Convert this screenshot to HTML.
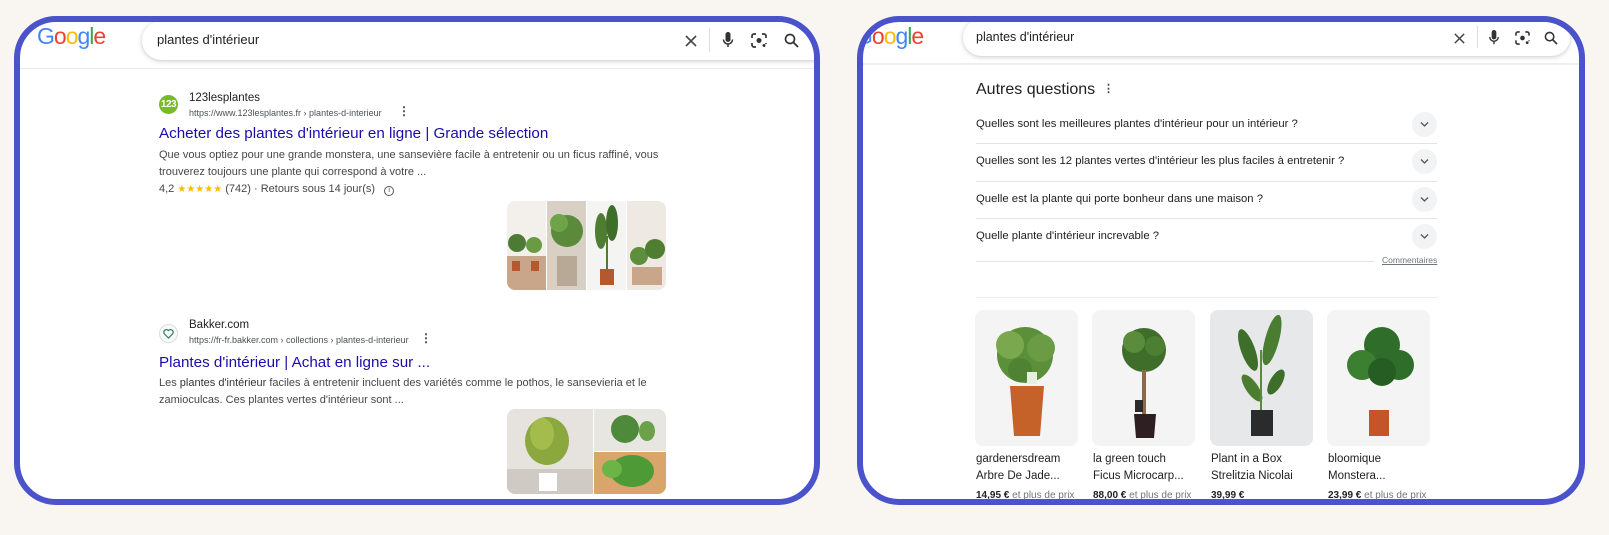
<!DOCTYPE html>
<html><head><meta charset="utf-8"><style>
*{margin:0;padding:0;box-sizing:border-box}
body{width:1609px;height:535px;background:#f9f5f1;position:relative;overflow:hidden;font-family:"Liberation Sans",Arial,sans-serif;color:#202124}
.panel{position:absolute;top:16px;height:489px;border:6px solid #4a52cc;border-radius:42px;background:#fff;overflow:hidden}
.a{position:absolute;white-space:nowrap}
.bar{position:absolute;background:#fff;border-radius:20px;box-shadow:0 1px 5px rgba(32,33,36,.25)}
.hl{position:absolute;left:0;right:0;height:1px;background:#e8eaed}
.logo{font-size:23px;letter-spacing:-1px;font-weight:normal}
.ic{position:absolute}
.sn{font-size:11px;color:#474747;line-height:17px}
.ttl{font-size:15.2px;color:#1a0dab}
.q{font-size:11.3px;color:#202124}
.sep{position:absolute;height:1px;background:#e3e3e3}
.chev{position:absolute;width:25px;height:25px;border-radius:50%;background:#f1f3f4}
.chev svg{position:absolute;left:8px;top:9px}
.card{position:absolute;top:288px;width:103px;height:136px;border-radius:8px;background:#f4f4f4;overflow:hidden}
.lb{font-size:11.5px;color:#202124}
.pr{font-size:10px;color:#202124}
.pr span{color:#70757a}
</style></head><body>

<!-- LEFT PANEL -->
<div class="panel" style="left:14px;width:806px">
 <div class="a logo" style="left:17px;top:1px"><span style="color:#4285f4">G</span><span style="color:#ea4335">o</span><span style="color:#fbbc05">o</span><span style="color:#4285f4">g</span><span style="color:#34a853">l</span><span style="color:#ea4335">e</span></div>
 <div class="bar" style="left:122px;top:-1px;width:700px;height:39px"></div>
 <div class="a" style="left:137px;top:10px;font-size:13px">plantes d'intérieur</div>
 <svg class="ic" style="left:664px;top:12px" width="14" height="14" viewBox="0 0 14 14"><path d="M2 2L12 12M12 2L2 12" stroke="#444" stroke-width="1.6"/></svg>
 <div class="a" style="left:689px;top:6px;width:1px;height:24px;background:#ddd"></div>
 <svg class="ic" style="left:702px;top:10px" width="12" height="17" viewBox="0 0 12 17"><rect x="3.5" y="0" width="5" height="10" rx="2.5" fill="#333"/><path d="M1.5 7.5a4.5 4.5 0 0 0 9 0M6 12v3" stroke="#333" stroke-width="1.5" fill="none"/></svg>
 <svg class="ic" style="left:731px;top:11px" width="16" height="15" viewBox="0 0 16 15"><path d="M1 5V3a2 2 0 0 1 2-2h2M11 1h2a2 2 0 0 1 2 2v2M1 10v2a2 2 0 0 0 2 2h2M15 10v1" stroke="#333" stroke-width="1.7" fill="none"/><circle cx="8" cy="7.5" r="2.5" fill="#333"/><circle cx="13" cy="12.5" r="1.5" fill="#333"/></svg>
 <svg class="ic" style="left:764px;top:11px" width="15" height="15" viewBox="0 0 15 15"><circle cx="6" cy="6" r="4.5" stroke="#333" stroke-width="1.7" fill="none"/><path d="M9.3 9.3L14 14" stroke="#333" stroke-width="1.8"/></svg>
 <div class="hl" style="top:46px"></div>

 <div class="a" style="left:139px;top:73px;width:19px;height:19px;border-radius:50%;background:#7ab929;color:#fff;font-size:10px;font-weight:bold;line-height:19px;text-align:center;letter-spacing:-.5px">123</div>
 <div class="a" style="left:169px;top:70px;font-size:11.5px">123lesplantes</div>
 <div class="a" style="left:169px;top:86px;font-size:9px;color:#4d5156">https://www.123lesplantes.fr › plantes-d-interieur</div>
 <div class="a" style="left:378px;top:82px;font-size:12px;color:#444;font-weight:bold">⋮</div>
 <div class="a ttl" style="left:139px;top:103px">Acheter des plantes d'intérieur en ligne | Grande sélection</div>
 <div class="a sn" style="left:139px;top:125px">Que vous optiez pour une grande monstera, une sansevière facile à entretenir ou un ficus raffiné, vous<br>trouverez toujours une plante qui correspond à votre ...</div>
 <div class="a sn" style="left:139px;top:159px">4,2 <span style="color:#fbbc04;font-size:10px">★★★★★</span> (742) · Retours sous 14 jour(s) &nbsp; <span style="display:inline-block;width:10px;height:10px;border:1px solid #555;border-radius:50%;font-size:7px;line-height:8px;text-align:center">i</span></div>
 <div class="a" style="left:487px;top:179px;width:159px;height:89px;border-radius:8px;overflow:hidden;display:flex;gap:1px">
  <svg width="39" height="89"><rect width="39" height="89" fill="#f3f0ec"/><rect x="0" y="55" width="39" height="34" fill="#c9a58a"/><circle cx="10" cy="42" r="9" fill="#4d7a35"/><circle cx="27" cy="44" r="8" fill="#6b9a44"/><rect x="5" y="60" width="8" height="10" fill="#b5582e"/><rect x="24" y="60" width="8" height="10" fill="#b5582e"/></svg>
  <svg width="39" height="89"><rect width="39" height="89" fill="#d8cfc5"/><circle cx="20" cy="30" r="16" fill="#5a8a3a"/><circle cx="12" cy="22" r="9" fill="#6fa347"/><rect x="10" y="55" width="20" height="30" fill="#b8a996"/></svg>
  <svg width="39" height="89"><rect width="39" height="89" fill="#f4f4f2"/><ellipse cx="14" cy="30" rx="6" ry="18" fill="#4e7d32"/><ellipse cx="25" cy="22" rx="6" ry="18" fill="#3f6e28"/><rect x="19" y="35" width="2" height="35" fill="#4e7d32"/><rect x="13" y="68" width="14" height="16" fill="#b5582e"/></svg>
  <svg width="39" height="89"><rect width="39" height="89" fill="#eee9e3"/><circle cx="12" cy="55" r="9" fill="#5d8e3b"/><circle cx="28" cy="48" r="10" fill="#4f7d31"/><rect x="5" y="66" width="30" height="18" fill="#c9a58a"/></svg>
 </div>

 <div class="a" style="left:139px;top:302px;width:19px;height:19px;border-radius:50%;border:1px solid #dadce0;background:#f8f9fa"><svg width="17" height="17" viewBox="0 0 17 17"><path d="M8.5 13L4.5 9A2.3 2.3 0 0 1 8.5 5.5A2.3 2.3 0 0 1 12.5 9Z" stroke="#2e7d5b" stroke-width="1.2" fill="none"/></svg></div>
 <div class="a" style="left:169px;top:297px;font-size:11.5px">Bakker.com</div>
 <div class="a" style="left:169px;top:313px;font-size:9px;color:#4d5156">https://fr-fr.bakker.com › collections › plantes-d-interieur</div>
 <div class="a" style="left:400px;top:309px;font-size:12px;color:#444;font-weight:bold">⋮</div>
 <div class="a ttl" style="left:139px;top:332px">Plantes d'intérieur | Achat en ligne sur ...</div>
 <div class="a sn" style="left:139px;top:353px">Les <b style="font-weight:normal;color:#333">plantes d'intérieur</b> faciles à entretenir incluent des variétés comme le pothos, le sansevieria et le<br>zamioculcas. Ces plantes vertes d'intérieur sont ...</div>
 <div class="a" style="left:487px;top:387px;width:159px;height:85px;border-radius:8px;overflow:hidden">
  <svg width="159" height="85"><rect width="86" height="85" fill="#e6e3de"/><rect y="60" width="86" height="25" fill="#cfcac4"/><ellipse cx="40" cy="32" rx="22" ry="24" fill="#8aa83e"/><ellipse cx="35" cy="25" rx="12" ry="16" fill="#a3bc4c"/><rect x="32" y="64" width="18" height="18" fill="#fff"/>
  <rect x="87" width="72" height="42" fill="#e8e6e1"/><ellipse cx="118" cy="20" rx="14" ry="14" fill="#4f8a3c"/><ellipse cx="140" cy="22" rx="8" ry="10" fill="#6ca04b"/>
  <rect x="87" y="43" width="72" height="42" fill="#d9a56a"/><ellipse cx="125" cy="62" rx="22" ry="16" fill="#4e9a36"/><ellipse cx="105" cy="60" rx="10" ry="9" fill="#6cb446"/></svg>
 </div>
</div>

<!-- RIGHT PANEL -->
<div class="panel" style="left:857px;width:728px">
 <div class="a logo" style="left:-8px;top:1px"><span style="color:#4285f4">G</span><span style="color:#ea4335">o</span><span style="color:#fbbc05">o</span><span style="color:#4285f4">g</span><span style="color:#34a853">l</span><span style="color:#ea4335">e</span></div>
 <div class="bar" style="left:100px;top:-3px;width:607px;height:37px"></div>
 <div class="a" style="left:113px;top:8px;font-size:12.5px">plantes d'intérieur</div>
 <svg class="ic" style="left:590px;top:10px" width="13" height="13" viewBox="0 0 14 14"><path d="M2 2L12 12M12 2L2 12" stroke="#444" stroke-width="1.6"/></svg>
 <div class="a" style="left:614px;top:4px;width:1px;height:22px;background:#ddd"></div>
 <svg class="ic" style="left:625px;top:8px" width="12" height="16" viewBox="0 0 12 17"><rect x="3.5" y="0" width="5" height="10" rx="2.5" fill="#333"/><path d="M1.5 7.5a4.5 4.5 0 0 0 9 0M6 12v3" stroke="#333" stroke-width="1.5" fill="none"/></svg>
 <svg class="ic" style="left:652px;top:9px" width="15" height="14" viewBox="0 0 16 15"><path d="M1 5V3a2 2 0 0 1 2-2h2M11 1h2a2 2 0 0 1 2 2v2M1 10v2a2 2 0 0 0 2 2h2M15 10v1" stroke="#333" stroke-width="1.7" fill="none"/><circle cx="8" cy="7.5" r="2.5" fill="#333"/><circle cx="13" cy="12.5" r="1.5" fill="#333"/></svg>
 <svg class="ic" style="left:681px;top:9px" width="14" height="14" viewBox="0 0 15 15"><circle cx="6" cy="6" r="4.5" stroke="#333" stroke-width="1.7" fill="none"/><path d="M9.3 9.3L14 14" stroke="#333" stroke-width="1.8"/></svg>
 <div class="hl" style="top:41px;height:2px;background:#eceef0"></div>

 <div class="a" style="left:113px;top:59px;font-size:16px">Autres questions</div>
 <div class="a" style="left:240px;top:60px;font-size:11px;color:#444;font-weight:bold">⋮</div>

 <div class="a q" style="left:113px;top:96px">Quelles sont les meilleures plantes d'intérieur pour un intérieur ?</div>
 <div class="a q" style="left:113px;top:133px">Quelles sont les 12 plantes vertes d'intérieur les plus faciles à entretenir ?</div>
 <div class="a q" style="left:113px;top:171px">Quelle est la plante qui porte bonheur dans une maison ?</div>
 <div class="a q" style="left:113px;top:208px">Quelle plante d'intérieur increvable ?</div>
 <div class="chev" style="left:549px;top:90px"><svg width="9" height="7" viewBox="0 0 9 7"><path d="M1 1.5L4.5 5L8 1.5" stroke="#555" stroke-width="1.3" fill="none"/></svg></div>
 <div class="chev" style="left:549px;top:127px"><svg width="9" height="7" viewBox="0 0 9 7"><path d="M1 1.5L4.5 5L8 1.5" stroke="#555" stroke-width="1.3" fill="none"/></svg></div>
 <div class="chev" style="left:549px;top:165px"><svg width="9" height="7" viewBox="0 0 9 7"><path d="M1 1.5L4.5 5L8 1.5" stroke="#555" stroke-width="1.3" fill="none"/></svg></div>
 <div class="chev" style="left:549px;top:202px"><svg width="9" height="7" viewBox="0 0 9 7"><path d="M1 1.5L4.5 5L8 1.5" stroke="#555" stroke-width="1.3" fill="none"/></svg></div>
 <div class="sep" style="left:113px;width:461px;top:121px"></div>
 <div class="sep" style="left:113px;width:461px;top:159px"></div>
 <div class="sep" style="left:113px;width:461px;top:196px"></div>
 <div class="sep" style="left:113px;width:398px;top:239px"></div>
 <div class="a" style="left:519px;top:233px;font-size:8.5px;color:#70757a;text-decoration:underline">Commentaires</div>
 <div class="sep" style="left:113px;width:461px;top:275px;background:#ececec"></div>

 <div class="card" style="left:112px"><svg width="103" height="136"><circle cx="50" cy="45" r="28" fill="#5b8f3a"/><circle cx="35" cy="35" r="14" fill="#7aa84e"/><circle cx="66" cy="38" r="14" fill="#6c9b45"/><circle cx="45" cy="60" r="12" fill="#4f8232"/><rect x="52" y="62" width="10" height="12" fill="#e6f0e0"/><path d="M35 76h34l-4 50H39z" fill="#c4622a"/></svg></div>
 <div class="card" style="left:229px"><svg width="103" height="136"><circle cx="52" cy="40" r="22" fill="#3f6d2a"/><circle cx="42" cy="32" r="11" fill="#5a8c3c"/><circle cx="63" cy="36" r="10" fill="#4d7f33"/><rect x="50" y="60" width="4" height="45" fill="#8a6a4a"/><rect x="43" y="90" width="8" height="12" fill="#2a2a2a"/><path d="M42 104h22l-2 24H44z" fill="#2e1f23"/></svg></div>
 <div class="card" style="left:347px;background:#e7e8ea"><svg width="103" height="136"><ellipse cx="38" cy="40" rx="7" ry="22" fill="#3d6e2a" transform="rotate(-20 38 40)"/><ellipse cx="62" cy="30" rx="7" ry="26" fill="#4a7c32" transform="rotate(15 62 30)"/><ellipse cx="42" cy="78" rx="6" ry="16" fill="#4a7c32" transform="rotate(-35 42 78)"/><ellipse cx="66" cy="72" rx="6" ry="14" fill="#3d6e2a" transform="rotate(30 66 72)"/><rect x="50" y="40" width="2" height="62" fill="#5a8a3a"/><rect x="41" y="100" width="22" height="26" fill="#2b2b2b"/></svg></div>
 <div class="card" style="left:464px"><svg width="103" height="136"><circle cx="55" cy="35" r="18" fill="#2f6e2a"/><circle cx="35" cy="55" r="15" fill="#3b7f31"/><circle cx="72" cy="55" r="15" fill="#2f6e2a"/><circle cx="55" cy="62" r="14" fill="#255d22"/><rect x="42" y="100" width="20" height="26" fill="#c4552a"/></svg></div>

 <div class="a lb" style="left:113px;top:431px">gardenersdream</div>
 <div class="a lb" style="left:113px;top:448px">Arbre De Jade...</div>
 <div class="a pr" style="left:113px;top:468px"><b>14,95 €</b> <span>et plus de prix</span></div>
 <div class="a lb" style="left:230px;top:431px">la green touch</div>
 <div class="a lb" style="left:230px;top:448px">Ficus Microcarp...</div>
 <div class="a pr" style="left:230px;top:468px"><b>88,00 €</b> <span>et plus de prix</span></div>
 <div class="a lb" style="left:348px;top:431px">Plant in a Box</div>
 <div class="a lb" style="left:348px;top:448px">Strelitzia Nicolai</div>
 <div class="a pr" style="left:348px;top:468px"><b>39,99 €</b></div>
 <div class="a lb" style="left:465px;top:431px">bloomique</div>
 <div class="a lb" style="left:465px;top:448px">Monstera...</div>
 <div class="a pr" style="left:465px;top:468px"><b>23,99 €</b> <span>et plus de prix</span></div>
</div>
</body></html>
